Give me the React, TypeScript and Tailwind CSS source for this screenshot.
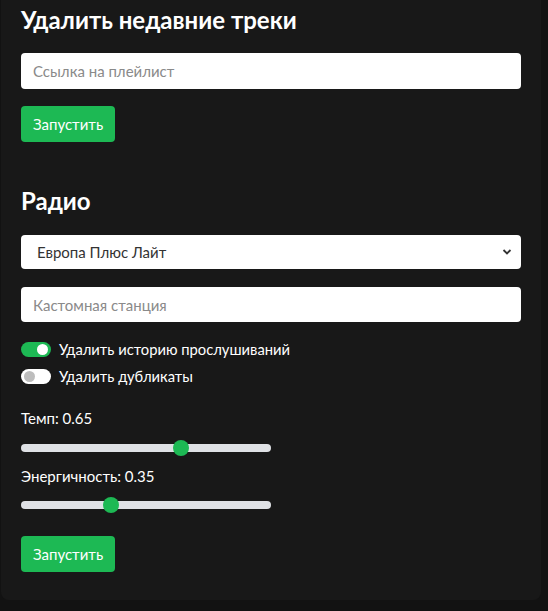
import { useState } from "react";

function Toggle({ on }: { on: boolean }) {
  return (
    <span
      className={`relative inline-block w-[30px] h-[15px] rounded-full ${
        on ? "bg-[#1db954]" : "bg-white"
      }`}
    >
      <span
        className={`absolute top-[2px] w-[11px] h-[11px] rounded-full ${
          on ? "right-[3px] bg-white" : "left-[3px] bg-[#bdbdbd]"
        }`}
      />
    </span>
  );
}

function Slider({ value }: { value: number }) {
  return (
    <div className="relative w-[250px] h-[16px] flex items-center">
      <div className="w-full h-[8px] rounded-full bg-[#dfe1e5]" />
      <div
        className="absolute top-0 w-[16px] h-[16px] rounded-full bg-[#1db954]"
        style={{ left: `calc(${value * 100}% - ${value * 16}px)` }}
      />
    </div>
  );
}

export default function App() {
  const [tempo] = useState(0.65);
  const [energy] = useState(0.35);

  return (
    <div
      className="min-h-[611px] bg-[#121212] pl-px pr-[7px] pb-[11px]"
      style={{ fontFamily: "Lato, 'Noto Sans', sans-serif" }}
    >
      <div className="bg-[#181818] rounded-b-lg px-5 pt-[5px] pb-[28px] text-white">
        <h2 className="text-[24px] leading-[29px] font-bold">Удалить недавние треки</h2>
        <input
          placeholder="Ссылка на плейлист"
          className="mt-[19px] block w-full h-[36px] rounded bg-white px-3 text-[15px] text-[#222] placeholder:text-[#8a8a8a] outline-none"
        />
        <button className="mt-[17px] h-[36px] px-3 rounded bg-[#1db954] text-[15px] text-white">
          Запустить
        </button>

        <h2 className="mt-[44px] text-[24px] leading-[29px] font-bold">Радио</h2>
        <div className="mt-[20px] relative">
          <select className="block w-full h-[34px] rounded bg-white pl-4 text-[15px] text-[#333] appearance-none outline-none">
            <option>Европа Плюс Лайт</option>
          </select>
          <svg
            className="absolute right-[9px] top-[12px] pointer-events-none"
            width="10"
            height="10"
            viewBox="0 0 10 10"
          >
            <path d="M1.5 3 L5 6.5 L8.5 3" fill="none" stroke="#333" strokeWidth="1.8" />
          </svg>
        </div>
        <input
          placeholder="Кастомная станция"
          className="mt-[18px] block w-full h-[35px] rounded bg-white px-3 text-[15px] text-[#222] placeholder:text-[#8a8a8a] outline-none"
        />

        <div className="mt-[17px] flex flex-col gap-[6px] text-[14.75px]">
          <label className="flex items-center gap-2 h-[21px]">
            <Toggle on={true} />
            <span>Удалить историю прослушиваний</span>
          </label>
          <label className="flex items-center gap-2 h-[21px]">
            <Toggle on={false} />
            <span>Удалить дубликаты</span>
          </label>
        </div>

        <div className="mt-[21px] text-[15px] leading-[20px]">Темп: {tempo}</div>
        <div className="mt-[12px]">
          <Slider value={tempo} />
        </div>
        <div className="mt-[10px] text-[15px] leading-[20px]">Энергичность: {energy}</div>
        <div className="mt-[11px]">
          <Slider value={energy} />
        </div>

        <button className="mt-[23px] h-[36px] px-3 rounded bg-[#1db954] text-[15px] text-white">
          Запустить
        </button>
      </div>
    </div>
  );
}
